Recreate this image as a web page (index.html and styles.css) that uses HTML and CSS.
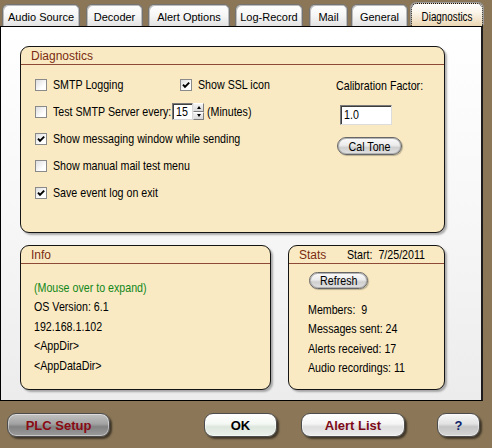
FILE: index.html
```html
<!DOCTYPE html>
<html>
<head>
<meta charset="utf-8">
<title>Diagnostics</title>
<link rel="stylesheet" href="styles.css">
</head>
<body>
<div class="window">
  <nav class="tabs">
    <div class="tab t1">Audio Source</div>
    <div class="tab t2">Decoder</div>
    <div class="tab t3">Alert Options</div>
    <div class="tab t4">Log-Record</div>
    <div class="tab t5">Mail</div>
    <div class="tab t6">General</div>
    <div class="tab t7 active"><span class="nc">Diagnostics</span></div>
  </nav>
  <main class="panel">
    <section class="group diag">
      <header class="ghead"><span class="gtitle">Diagnostics</span></header>
      <div class="diag-body">
        <div class="opts">
          <div class="row split">
            <label class="cb"><span class="box"></span><span class="n">SMTP Logging</span></label>
            <label class="cb ssl"><span class="box"><svg class="tick" viewBox="0 0 10 10"><path d="M2 4.6 L4 6.9 L8.2 2.6"/></svg></span><span class="n">Show SSL icon</span></label>
          </div>
          <div class="row split">
            <label class="cb"><span class="box"></span><span class="n">Test SMTP Server every:</span></label>
            <div class="spinwrap">
              <span class="spin"><span class="spin-val"><span class="n">15</span></span><span class="spin-btns"><span class="sb up"></span><span class="sb down"></span></span></span>
              <span class="minutes n">(Minutes)</span>
            </div>
          </div>
          <div class="row">
            <label class="cb"><span class="box"><svg class="tick" viewBox="0 0 10 10"><path d="M2 4.6 L4 6.9 L8.2 2.6"/></svg></span><span class="n">Show messaging window while sending</span></label>
          </div>
          <div class="row">
            <label class="cb"><span class="box"></span><span class="n">Show manual mail test menu</span></label>
          </div>
          <div class="row">
            <label class="cb"><span class="box"><svg class="tick" viewBox="0 0 10 10"><path d="M2 4.6 L4 6.9 L8.2 2.6"/></svg></span><span class="n">Save event log on exit</span></label>
          </div>
        </div>
        <div class="cal">
          <div class="cal-label"><span class="n">Calibration Factor:</span></div>
          <div class="cal-input"><span class="n">1.0</span></div>
          <div class="pill cal-btn"><span class="nc">Cal Tone</span></div>
        </div>
      </div>
    </section>
    <div class="lower">
      <section class="group info">
        <header class="ghead"><span class="gtitle">Info</span></header>
        <div class="info-body">
          <div class="line green">(Mouse over to expand)</div>
          <div class="line">OS Version: 6.1</div>
          <div class="line">192.168.1.102</div>
          <div class="line">&lt;AppDir&gt;</div>
          <div class="line">&lt;AppDataDir&gt;</div>
        </div>
      </section>
      <section class="group stats">
        <header class="ghead"><span class="gtitle">Stats</span><span class="start n">Start:&nbsp; 7/25/2011</span></header>
        <div class="stats-body">
          <div class="pill refresh"><span class="nc">Refresh</span></div>
          <div class="stats-lines">
            <div class="line">Members:&nbsp; 9</div>
            <div class="line">Messages sent: 24</div>
            <div class="line">Alerts received: 17</div>
            <div class="line">Audio recordings: 11</div>
          </div>
        </div>
      </section>
    </div>
  </main>
  <footer class="buttons">
    <div class="btn plc">PLC Setup</div>
    <div class="btn ok">OK</div>
    <div class="btn alert">Alert List</div>
    <div class="btn help">?</div>
  </footer>
</div>
</body>
</html>
```
FILE: styles.css
```css
* { box-sizing: border-box; }
html, body { margin: 0; padding: 0; }
body {
  background: #8b7758;
  font-family: "Liberation Sans", Arial, sans-serif;
  font-size: 13px;
  color: #000;
}
.window {
  width: 492px;
  height: 448px;
  background: #8b7758;
  overflow: hidden;
}

/* narrow text (Arial Narrow look) */
.n, .nc {
  display: inline-block;
  white-space: nowrap;
  transform: scaleX(0.82);
  transform-origin: 0 50%;
}
.nc { transform-origin: 50% 50%; }

/* tabs */
.tabs {
  height: 26px;
  display: flex;
  align-items: flex-end;
  padding-left: 2px;
}
.tab {
  height: 22px;
  border: 1px solid #747474;
  border-bottom: none;
  border-radius: 6px 6px 0 0;
  background: linear-gradient(#ffffff, #f6f6f6 50%, #e3e3e3);
  box-shadow: inset 1px 1px 0 #bcbcbc, inset -1px 0 0 #bcbcbc;
  font-size: 11px;
  display: flex;
  align-items: center;
  justify-content: center;
  padding-top: 3px;
  white-space: nowrap;
}
.t1 { width: 78px; }
.t2 { width: 57px; margin-left: 6px; }
.t3 { width: 82px; margin-left: 5px; }
.t4 { width: 68px; margin-left: 5px; }
.t5 { width: 39px; margin-left: 6px; }
.t6 { width: 57px; margin-left: 3px; }
.t7 { width: 72px; margin-left: 3px; }
.tab.active {
  height: 23px;
  border: 1px dotted #111;
  border-bottom: none;
  background: linear-gradient(#ffffff, #fbf4e8 40%, #ecd7b4);
  box-shadow: -1px -1px 0 #9a9a9a, 1px -1px 0 #9a9a9a;
  font-size: 12px;
  padding-top: 4px;
}

/* main panel */
.panel {
  width: 483px;
  height: 375px;
  border: 1px solid #000;
  border-right: 2px solid #1c1c1c;
  background: linear-gradient(#ffffff, #f7f7f7 50%, #ececec);
  padding: 19px 0 0 19px;
}
.group {
  background: #f9eac3;
  border: 1px solid #141414;
  border-radius: 9px;
  box-shadow: 2px 2px 2px rgba(0, 0, 0, 0.3);
}
.ghead {
  height: 18px;
  border-bottom: 1px solid #8d4b37;
  padding-left: 10px;
  display: flex;
  align-items: center;
}
.gtitle {
  font-size: 12px;
  color: #7b2c12;
}

/* diagnostics */
.diag { width: 425px; height: 187px; }
.diag-body {
  display: grid;
  grid-template-columns: 301px auto;
  padding: 6px 0 0 14px;
}
.row {
  height: 27px;
  display: flex;
  align-items: center;
}
.split > :first-child { width: 137px; }
.cb {
  display: flex;
  align-items: center;
  gap: 6px;
  white-space: nowrap;
}
.ssl { margin-left: 8px; }
.box {
  width: 12px;
  height: 12px;
  border: 1px solid #8a8a8a;
  background: linear-gradient(135deg, #dedede, #ffffff 70%);
  display: flex;
  align-items: center;
  justify-content: center;
  flex: none;
}
.tick { width: 10px; height: 10px; }
.tick path { fill: none; stroke: #000; stroke-width: 1.9; }

.spinwrap { display: flex; align-items: center; }
.spin {
  display: flex;
  height: 17px;
}
.spin-val {
  width: 21px;
  height: 17px;
  background: #fff;
  border: 1px solid;
  border-color: #7a7a7a #d8d8d8 #d8d8d8 #7a7a7a;
  box-shadow: inset 1px 1px 0 #404040;
  padding-left: 3px;
  line-height: 15px;
}
.spin-btns {
  width: 11px;
  display: flex;
  flex-direction: column;
}
.sb {
  flex: 1;
  background: linear-gradient(#f4f4f4, #d8d8d8);
  border: 1px solid;
  border-color: #ffffff #7d7d7d #7d7d7d #e6e6e6;
  display: flex;
  align-items: center;
  justify-content: center;
}
.sb::after {
  content: "";
  width: 0;
  height: 0;
  border-left: 2.5px solid transparent;
  border-right: 2.5px solid transparent;
}
.up::after { border-bottom: 3px solid #000; }
.down::after { border-top: 3px solid #000; }
.minutes { margin-left: 3px; }

.cal {
  display: flex;
  flex-direction: column;
  align-items: flex-start;
}
.cal-label {
  height: 29px;
  line-height: 29px;
}
.cal-input {
  margin: 5px 0 0 4px;
  width: 52px;
  height: 20px;
  background: #fff;
  border: 1px solid;
  border-color: #7a7a7a #dcdcdc #dcdcdc #7a7a7a;
  box-shadow: inset 1px 1px 0 #3c3c3c;
  padding-left: 3px;
  line-height: 18px;
}
.pill {
  border: 1px solid #666;
  border-radius: 9px;
  background: linear-gradient(#fbfbfb, #ececec 45%, #cfcfcf 60%, #e2e2e2);
  box-shadow: inset 0 0 0 1px #b3b3b3, 1px 1px 1px rgba(0, 0, 0, 0.25);
  display: flex;
  align-items: center;
  justify-content: center;
  white-space: nowrap;
}
.cal-btn {
  margin: 12px 0 0 1px;
  width: 65px;
  height: 18px;
}

/* lower groups */
.lower {
  display: flex;
  margin-top: 12px;
}
.info { width: 251px; height: 145px; }
.stats { width: 157px; height: 145px; margin-left: 17px; }
.info-body { padding: 14px 0 0 13px; }
.line {
  height: 19.4px;
  line-height: 19.4px;
  white-space: nowrap;
  transform: scaleX(0.82);
  transform-origin: 0 50%;
}
.green { color: #12881a; }
.start { margin-left: 21px; }
.stats-body { padding: 8px 0 0 20px; }
.refresh { width: 59px; height: 17px; }
.stats-lines { margin-top: 11px; margin-left: -1px; }

/* bottom buttons */
.buttons {
  display: flex;
  padding-top: 12px;
}
.btn {
  height: 24px;
  border-radius: 9px;
  border: 1px solid #4c4c4c;
  box-shadow: 2px 2px 2px rgba(0, 0, 0, 0.55), inset 0 0 0 1px rgba(255, 255, 255, 0.45);
  font-weight: bold;
  font-size: 13px;
  display: flex;
  align-items: center;
  justify-content: center;
  white-space: nowrap;
}
.plc {
  margin-left: 7px;
  width: 103px;
  background: linear-gradient(#c2c2c2, #a2a2a2 45%, #828282 58%, #9c9c9c);
  color: #8a0a14;
}
.ok {
  margin-left: 94px;
  width: 73px;
  background: linear-gradient(#ffffff, #f4f8f4 45%, #dde6dd 58%, #eaf0ea);
}
.alert {
  margin-left: 24px;
  width: 104px;
  background: linear-gradient(#ffffff, #f5f5f5 45%, #dedede 58%, #ececec);
  color: #7d0a18;
}
.help {
  margin-left: 32px;
  width: 43px;
  background: linear-gradient(#f8f8f8, #e2e2e2 45%, #c4c4c4 58%, #d6d6d6);
  color: #0b1f6b;
}
```
